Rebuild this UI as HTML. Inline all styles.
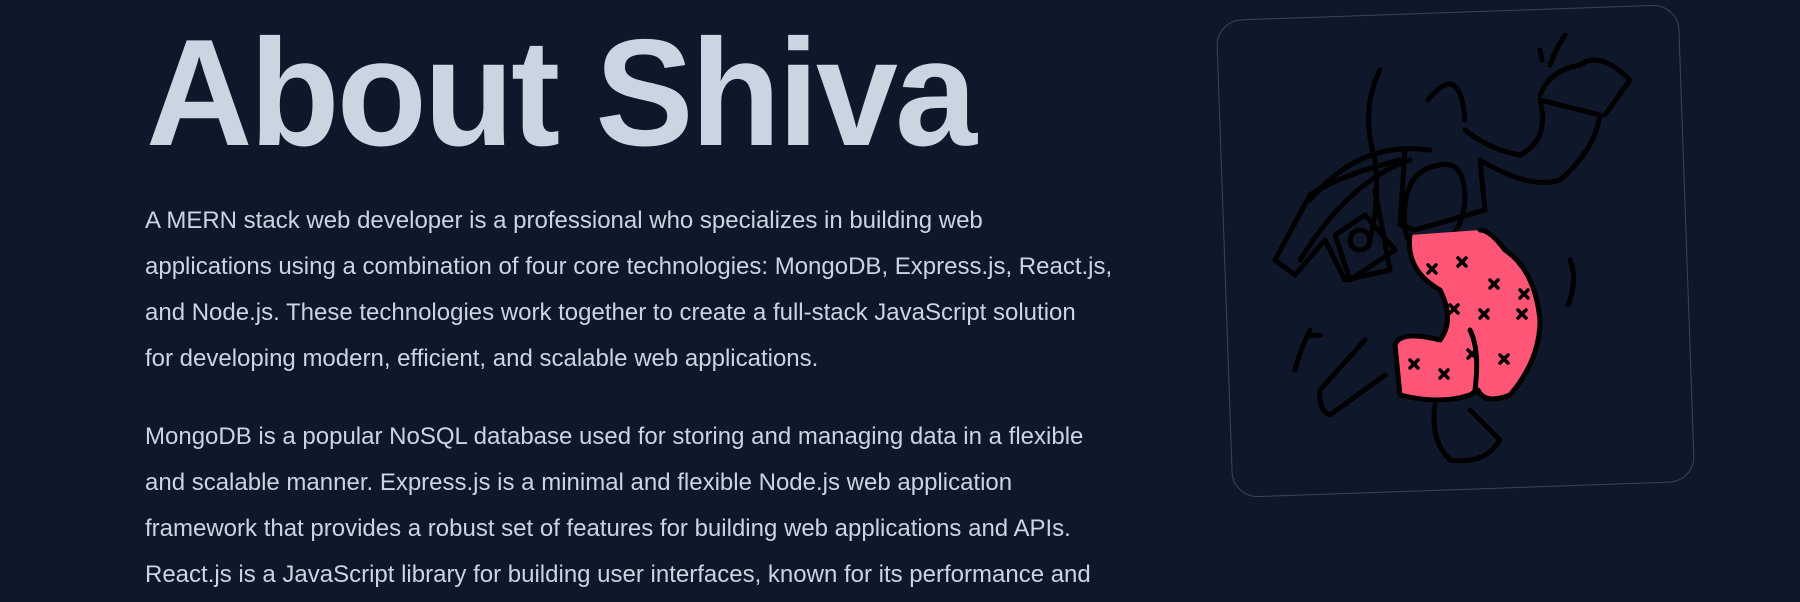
<!DOCTYPE html>
<html><head><meta charset="utf-8"><style>
html,body{margin:0;padding:0;background:#0f172a;width:1800px;height:602px;overflow:hidden}
body{position:relative;font-family:"Liberation Sans",sans-serif;color:#cbd5e1}
h1{position:absolute;left:146px;top:3px;margin:0;font-size:152px;font-weight:bold;letter-spacing:-3px;line-height:180px;color:#cbd5e1;white-space:nowrap;transform:scaleX(0.97);transform-origin:0 0}
.p{position:absolute;left:145px;font-size:24px;line-height:46px;white-space:nowrap;color:#cbd5e1;letter-spacing:0}
.card{position:absolute;left:1224px;top:12px;width:463px;height:478px;border:1.5px solid #3b4658;border-radius:26px;transform:rotate(-2deg);box-sizing:border-box}
</style></head><body>
<h1>About Shiva</h1>
<div class="p" style="top:198px">A MERN stack web developer is a professional who specializes in building web<br>applications using a combination of four core technologies: MongoDB, Express.js, React.js,<br>and Node.js. These technologies work together to create a full-stack JavaScript solution<br>for developing modern, efficient, and scalable web applications.</div>
<div class="p" style="top:414px">MongoDB is a popular NoSQL database used for storing and managing data in a flexible<br>and scalable manner. Express.js is a minimal and flexible Node.js web application<br>framework that provides a robust set of features for building web applications and APIs.<br>React.js is a JavaScript library for building user interfaces, known for its performance and</div>
<div class="card"></div>
<svg style="position:absolute;left:1200px;top:0" width="540" height="520" viewBox="0 0 540 520" fill="none" stroke="#000" stroke-width="5" stroke-linecap="round" stroke-linejoin="round">
<path d="M205 228 Q200 170 240 165 Q265 160 265 200 Q262 240 230 250 Q208 250 205 228Z"/>
<path d="M228 100 Q260 60 265 120"/>
<path d="M180 70 Q160 110 175 160 Q180 200 170 240"/>
<path d="M110 200 Q160 140 230 150 M100 260 Q150 180 210 160"/>
<path d="M205 150 L200 225 L215 230 L285 210 L280 160 Q330 190 360 180 Q395 150 400 115 L340 100 Q350 140 320 155 Q290 150 265 130"/>
<path d="M340 95 Q350 70 380 65 Q400 50 430 80 L405 115"/>
<path d="M200 160 Q140 175 110 195 L75 260 L95 275 L125 240 L145 280 L190 270 L175 190"/>
<path d="M135 235 L165 215 L195 250 L150 280Z"/>
<circle cx="160" cy="240" r="10"/>
<path d="M365 35 Q355 50 350 65 M340 50 L342 60 M370 260 Q378 280 368 305 M110 330 Q100 350 95 370 M120 335 L108 336"/>
<path d="M165 340 L120 390 Q118 410 130 415 L185 375"/>
<path d="M235 405 Q230 440 250 460 Q285 465 300 440 L270 410"/>
<path d="M210 235 Q205 270 240 290 Q255 320 240 340 Q200 330 195 345 L200 395 Q240 405 270 395 L278 390 Q285 405 310 395 Q340 360 340 320 Q335 270 305 250 Q290 230 280 230" fill="#ff5577"/>
<path d="M270 330 Q280 350 275 390" />
<g stroke-width="3.5"><path d="M228 265 l8 8 m0 -8 l-8 8 M258 258 l8 8 m0 -8 l-8 8 M290 280 l8 8 m0 -8 l-8 8 M250 305 l8 8 m0 -8 l-8 8 M280 310 l8 8 m0 -8 l-8 8 M318 310 l8 8 m0 -8 l-8 8 M210 360 l8 8 m0 -8 l-8 8 M240 370 l8 8 m0 -8 l-8 8 M268 350 l8 8 m0 -8 l-8 8 M300 355 l8 8 m0 -8 l-8 8 M320 290 l8 8 m0 -8 l-8 8"/></g>
</svg>
</body></html>
